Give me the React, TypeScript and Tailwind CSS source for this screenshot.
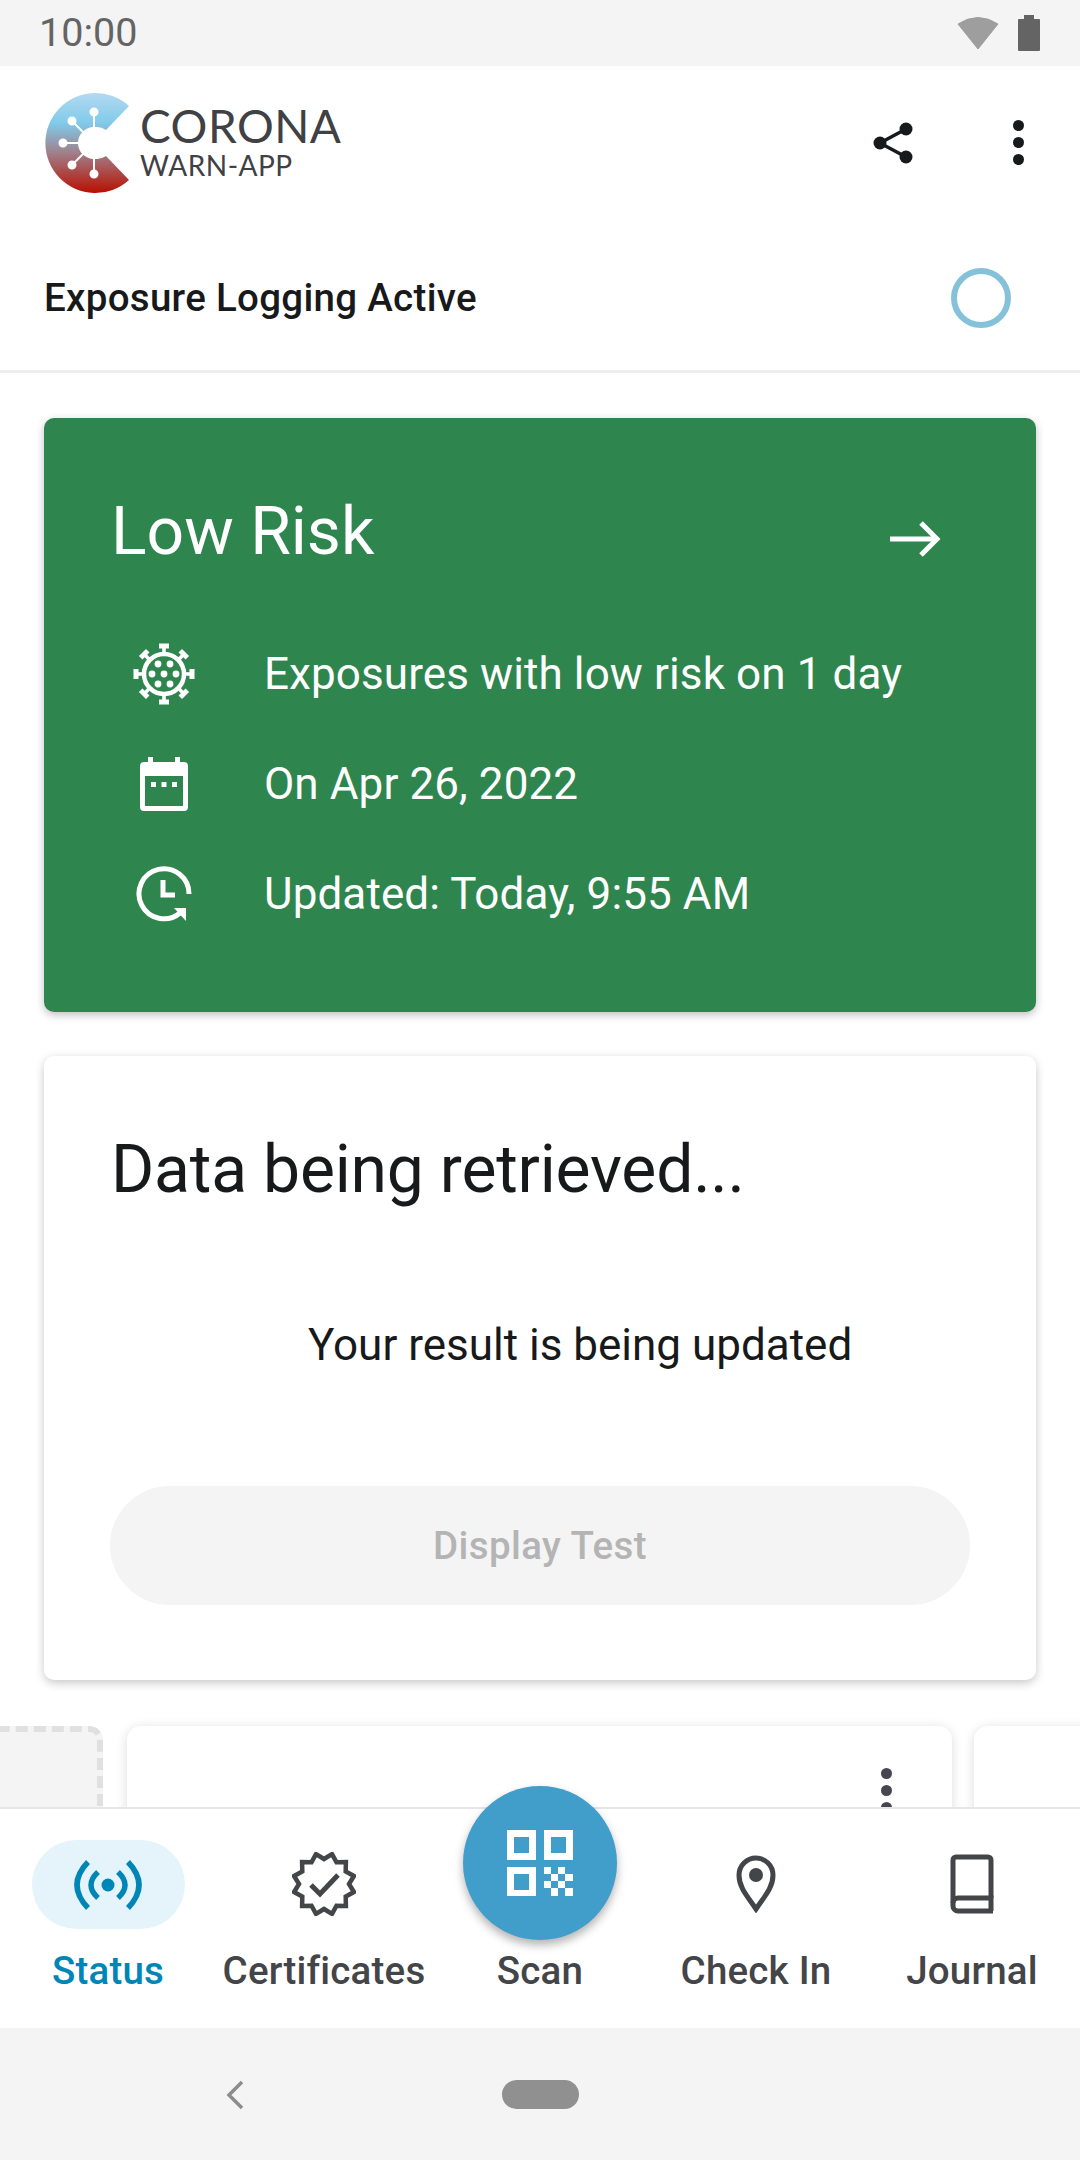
import React from "react";

const spikeAngles = [0, 45, 90, 135, 180, 225, 270, 315];
const virusDots = [[0, 0], [-6, -10], [6, -10], [-12, 0], [12, 0], [-6, 10], [6, 10]];

const badgePoints = Array.from({ length: 24 }, (_, i) => {
  const a = (i * Math.PI) / 12 - Math.PI / 2 + Math.PI / 12;
  const r = i % 2 === 0 ? 31 : 25;
  return `${(32 + r * Math.cos(a)).toFixed(1)},${(32 + r * Math.sin(a)).toFixed(1)}`;
}).join(" ");

const CoronaLogo = () => (
  <svg width="88" height="102" viewBox="0 0 88 102">
    <defs>
      <linearGradient id="cwa" x1="0" y1="0" x2="0" y2="1">
        <stop offset="0" stopColor="#b3d9f2" />
        <stop offset="0.3" stopColor="#80cbea" />
        <stop offset="0.6" stopColor="#a07f8a" />
        <stop offset="1" stopColor="#b80f00" />
      </linearGradient>
    </defs>
    <path d="M85 14 A50 50 0 1 0 85 88 L62 64 A16 16 0 1 1 62 38 Z" fill="url(#cwa)" />
    <circle cx="50" cy="51" r="16" fill="#fff" />
    <g stroke="#fff" strokeWidth="2" fill="#fff">
      <line x1="50" y1="51" x2="50" y2="22" />
      <line x1="50" y1="51" x2="50" y2="80" />
      <line x1="50" y1="51" x2="21" y2="51" />
      <line x1="50" y1="51" x2="29" y2="30" />
      <line x1="50" y1="51" x2="29" y2="72" />
      <circle cx="50" cy="20" r="3.5" />
      <circle cx="50" cy="82" r="3.5" />
      <circle cx="19" cy="51" r="3.5" />
      <circle cx="28" cy="29" r="3.5" />
      <circle cx="28" cy="73" r="3.5" />
    </g>
  </svg>
);

const ShareIcon = () => (
  <svg width="42" height="44" viewBox="0 0 42 44" fill="#17191a" stroke="#17191a">
    <line x1="33" y1="8" x2="7" y2="22" strokeWidth="3.5" />
    <line x1="33" y1="36" x2="7" y2="22" strokeWidth="3.5" />
    <circle cx="33" cy="8" r="6.5" strokeWidth="0" />
    <circle cx="7" cy="22" r="6.5" strokeWidth="0" />
    <circle cx="33" cy="36" r="6.5" strokeWidth="0" />
  </svg>
);

const MoreIcon = ({ color }: { color: string }) => (
  <div className="flex flex-col gap-[6px]">
    <div className="w-[11px] h-[11px] rounded-full" style={{ backgroundColor: color }} />
    <div className="w-[11px] h-[11px] rounded-full" style={{ backgroundColor: color }} />
    <div className="w-[11px] h-[11px] rounded-full" style={{ backgroundColor: color }} />
  </div>
);

const VirusIcon = () => (
  <svg width="64" height="64" viewBox="-32 -32 64 64" fill="#fff">
    <circle r="20" fill="none" stroke="#fff" strokeWidth="4.5" />
    {virusDots.map(([x, y], i) => (
      <circle key={i} cx={x} cy={y} r="3.4" />
    ))}
    {spikeAngles.map((a) => (
      <g key={a} transform={`rotate(${a})`}>
        <rect x="-1.8" y="-27" width="3.6" height="6" />
        <rect x="-5" y="-30.5" width="10" height="5" />
      </g>
    ))}
  </svg>
);

const CalendarIcon = () => (
  <svg width="48" height="54" viewBox="0 0 48 54" fill="#fff">
    <rect x="8" y="0" width="5" height="8" />
    <rect x="35" y="0" width="5" height="8" />
    <path d="M4 5h40a4 4 0 0 1 4 4v41a4 4 0 0 1-4 4H4a4 4 0 0 1-4-4V9a4 4 0 0 1 4-4zm1 14v30h38V19z" fillRule="evenodd" />
    <rect x="11" y="25" width="5" height="5" />
    <rect x="21.5" y="25" width="5" height="5" />
    <rect x="32" y="25" width="5" height="5" />
  </svg>
);

const ClockIcon = () => (
  <svg width="56" height="56" viewBox="0 0 56 56" fill="none" stroke="#fff" strokeWidth="5">
    <path d="M53 28 A25 25 0 1 0 44 47" />
    <path d="M27 14 V29 H39" />
    <path d="M38 42 H50 V55 Z" fill="#fff" stroke="none" />
  </svg>
);

const ArrowIcon = () => (
  <svg width="52" height="38" viewBox="0 0 52 38" fill="none" stroke="#fff" strokeWidth="5">
    <path d="M1 19 H47" />
    <path d="M32 3 L48 19 L32 35" />
  </svg>
);

const BroadcastIcon = () => (
  <svg width="70" height="52" viewBox="0 0 70 52" fill="none" stroke="#0086b6" strokeWidth="5.5">
    <circle cx="35" cy="26" r="6.5" fill="#0086b6" stroke="none" />
    <path d="M15 3 Q-7 26 15 49" />
    <path d="M55 3 Q77 26 55 49" />
    <path d="M25 13 Q11 26 25 39" />
    <path d="M45 13 Q59 26 45 39" />
  </svg>
);

const BadgeIcon = () => (
  <svg width="64" height="64" viewBox="0 0 64 64" fill="none" stroke="#434548" strokeWidth="4.5">
    <polygon points={badgePoints} />
    <path d="M19 33 L28 42 L46 23" strokeWidth="5" />
  </svg>
);

const PinIcon = () => (
  <svg width="40" height="58" viewBox="0 0 40 58" fill="none" stroke="#434548" strokeWidth="5">
    <path d="M20 54 C12 42 3 33 3 20 A17 17 0 0 1 37 20 C37 33 28 42 20 54 Z" />
    <circle cx="20" cy="20" r="7" fill="#434548" stroke="none" />
  </svg>
);

const BookIcon = () => (
  <svg width="46" height="60" viewBox="0 0 46 60" fill="none" stroke="#434548" strokeWidth="5">
    <path d="M42 44 V6 A3 3 0 0 0 39 3 H7 A3 3 0 0 0 4 6 V52 A5 5 0 0 0 9 57 H44" />
    <path d="M4 49 A5 5 0 0 1 9 44 H42 V57" />
  </svg>
);

const QrIcon = () => (
  <svg width="66" height="66" viewBox="0 0 66 66" fill="#fff">
    <path d="M0 0h29v30H0zM7 7v16h15V7z" fillRule="evenodd" />
    <path d="M37 0h29v30H37zM44 7v16h15V7z" fillRule="evenodd" />
    <path d="M0 37h29v30H0zM7 44v16h15V44z" fillRule="evenodd" />
    <path d="M37 37h7v7h-7zM51 37h7v7h-7zM44 44h7v7h-7zM58 44h8v7h-8zM37 51h7v7h-7zM51 51h7v7h-7zM44 58h7v8h-7zM58 58h8v8h-8z" />
  </svg>
);

const infoRows = [
  { icon: <VirusIcon />, text: "Exposures with low risk on 1 day" },
  { icon: <CalendarIcon />, text: "On Apr 26, 2022" },
  { icon: <ClockIcon />, text: "Updated: Today, 9:55 AM" },
];

const navItems = [
  { label: "Certificates", icon: <BadgeIcon /> },
  { label: "Check In", icon: <PinIcon /> },
  { label: "Journal", icon: <BookIcon /> },
];

const NavItem = ({ label, icon }: { label: string; icon: React.ReactNode }) => (
  <div className="flex flex-col items-center">
    <div className="h-[87px] flex items-center justify-center">{icon}</div>
    <span className="mt-[18px] text-[38.5px] leading-[52px] font-medium tracking-[0.2px] text-[#434548] whitespace-nowrap">{label}</span>
  </div>
);

export default function App() {
  return (
    <div className="w-[1080px] h-[2160px] flex flex-col bg-white overflow-hidden font-['Roboto',sans-serif] text-[#17191a]">
      <div className="h-[66px] shrink-0 bg-[#f4f4f4] flex items-center justify-between pl-[39px] pr-[40px]">
        <span className="text-[39.5px] text-[#646464]">10:00</span>
        <div className="flex items-center gap-[19px]">
          <svg width="42" height="34" viewBox="0 0 42 34">
            <path d="M1 8 Q21 -5 41 8 L21 33 Z" fill="#9e9e9e" stroke="#9e9e9e" strokeWidth="1" strokeLinejoin="round" />
          </svg>
          <svg width="22" height="36" viewBox="0 0 22 36">
            <path d="M6 0h10v4h5a1 1 0 0 1 1 1v30a1 1 0 0 1-1 1H1a1 1 0 0 1-1-1V5a1 1 0 0 1 1-1h5z" fill="#646464" />
          </svg>
        </div>
      </div>

      <div className="h-[160px] shrink-0 flex items-center justify-between pl-[44px] pr-[56px] pb-[7px]">
        <div className="flex items-center gap-[8px]">
          <CoronaLogo />
          <div className="flex flex-col font-['Lato',sans-serif] text-[#3f4144]">
            <span className="text-[46px] leading-[46px] tracking-[0.5px]">CORONA</span>
            <span className="text-[28px] leading-[33px] tracking-[0.5px]">WARN-APP</span>
          </div>
        </div>
        <div className="flex items-center gap-[98px]">
          <ShareIcon />
          <MoreIcon color="#17191a" />
        </div>
      </div>

      <div className="h-[147px] shrink-0 flex items-center justify-between pl-[44px] pr-[69px] border-b-[3px] border-[#eeeeee]">
        <span className="text-[38.5px] font-medium tracking-[0.3px]">Exposure Logging Active</span>
        <div className="w-[60px] h-[60px] rounded-full border-[6px] border-[#85c2da]" />
      </div>

      <div className="flex-1 min-h-0 overflow-hidden pt-[45px]">
        <div className="mx-[44px] h-[594px] rounded-[10px] bg-[#2f854e] text-white shadow-[0_3px_8px_rgba(0,0,0,0.25)] pl-[67px] pr-[95px] pt-[70px]">
          <div className="flex items-center justify-between h-[88px]">
            <span className="text-[66px] leading-[88px]">Low Risk</span>
            <div className="mt-[14px]">
              <ArrowIcon />
            </div>
          </div>
          <div className="flex flex-col gap-[30px] mt-[58px]">
            {infoRows.map((row) => (
              <div key={row.text} className="flex items-center h-[80px]">
                <div className="w-[104px] flex justify-center ml-[1px]">{row.icon}</div>
                <span className="ml-[-20px] pl-[68px] text-[44px] tracking-[0.1px]">{row.text}</span>
              </div>
            ))}
          </div>
        </div>

        <div className="mx-[44px] mt-[44px] h-[624px] rounded-[10px] bg-white shadow-[0_3px_10px_rgba(0,0,0,0.22)] pl-[66px] pr-[66px] pt-[70px]">
          <div className="text-[66px] leading-[88px] pl-[1px] tracking-[-0.2px]">Data being retrieved...</div>
          <div className="mt-[103px] pl-[198px] text-[44px] leading-[56px]">Your result is being updated</div>
          <div className="mt-[113px] h-[119px] rounded-full bg-[#f4f4f4] flex items-center justify-center text-[38.5px] font-medium tracking-[0.4px] text-[#b4b4b4]">
            Display Test
          </div>
        </div>

        <div className="flex gap-[24px] mt-[46px]">
          <div className="w-[300px] h-[300px] shrink-0 ml-[-197px] rounded-[14px] bg-[#f4f4f4] border-[6px] border-dashed border-[#e0e0e0]" />
          <div className="w-[825px] h-[300px] shrink-0 rounded-[14px] bg-white shadow-[0_2px_12px_rgba(0,0,0,0.14)] flex justify-end pr-[60px] pt-[42px]">
            <MoreIcon color="#47454f" />
          </div>
          <div className="w-[300px] h-[300px] shrink-0 rounded-[14px] bg-white shadow-[0_2px_12px_rgba(0,0,0,0.14)] ml-[-2px]" />
        </div>
      </div>

      <div className="relative h-[221px] shrink-0 bg-white border-t-[2px] border-[#e6e6e6] grid grid-cols-5 pt-[31px]">
        <div className="flex flex-col items-center">
          <div className="w-[153px] h-[89px] rounded-full bg-[#e5f4fb] flex items-center justify-center">
            <BroadcastIcon />
          </div>
          <span className="mt-[16px] text-[38.5px] leading-[52px] font-medium tracking-[0.2px] text-[#0086b6]">Status</span>
        </div>
        <NavItem {...navItems[0]} />
        <div className="flex flex-col items-center">
          <div className="absolute top-[-23px] w-[154px] h-[154px] rounded-full bg-[#419dca] shadow-[0_5px_10px_rgba(0,0,0,0.3)] flex items-center justify-center">
            <QrIcon />
          </div>
          <span className="mt-[105px] text-[38.5px] leading-[52px] font-medium tracking-[0.2px] text-[#434548]">Scan</span>
        </div>
        <NavItem {...navItems[1]} />
        <NavItem {...navItems[2]} />
      </div>

      <div className="h-[132px] shrink-0 bg-[#f4f4f4] flex items-center justify-center relative">
        <svg className="absolute left-[225px] top-[52px]" width="20" height="30" viewBox="0 0 20 30" fill="none" stroke="#8c8c8c" strokeWidth="3.5">
          <path d="M17 2 L4 15 L17 28" />
        </svg>
        <div className="w-[77px] h-[29px] rounded-full bg-[#909090]" />
      </div>
    </div>
  );
}
